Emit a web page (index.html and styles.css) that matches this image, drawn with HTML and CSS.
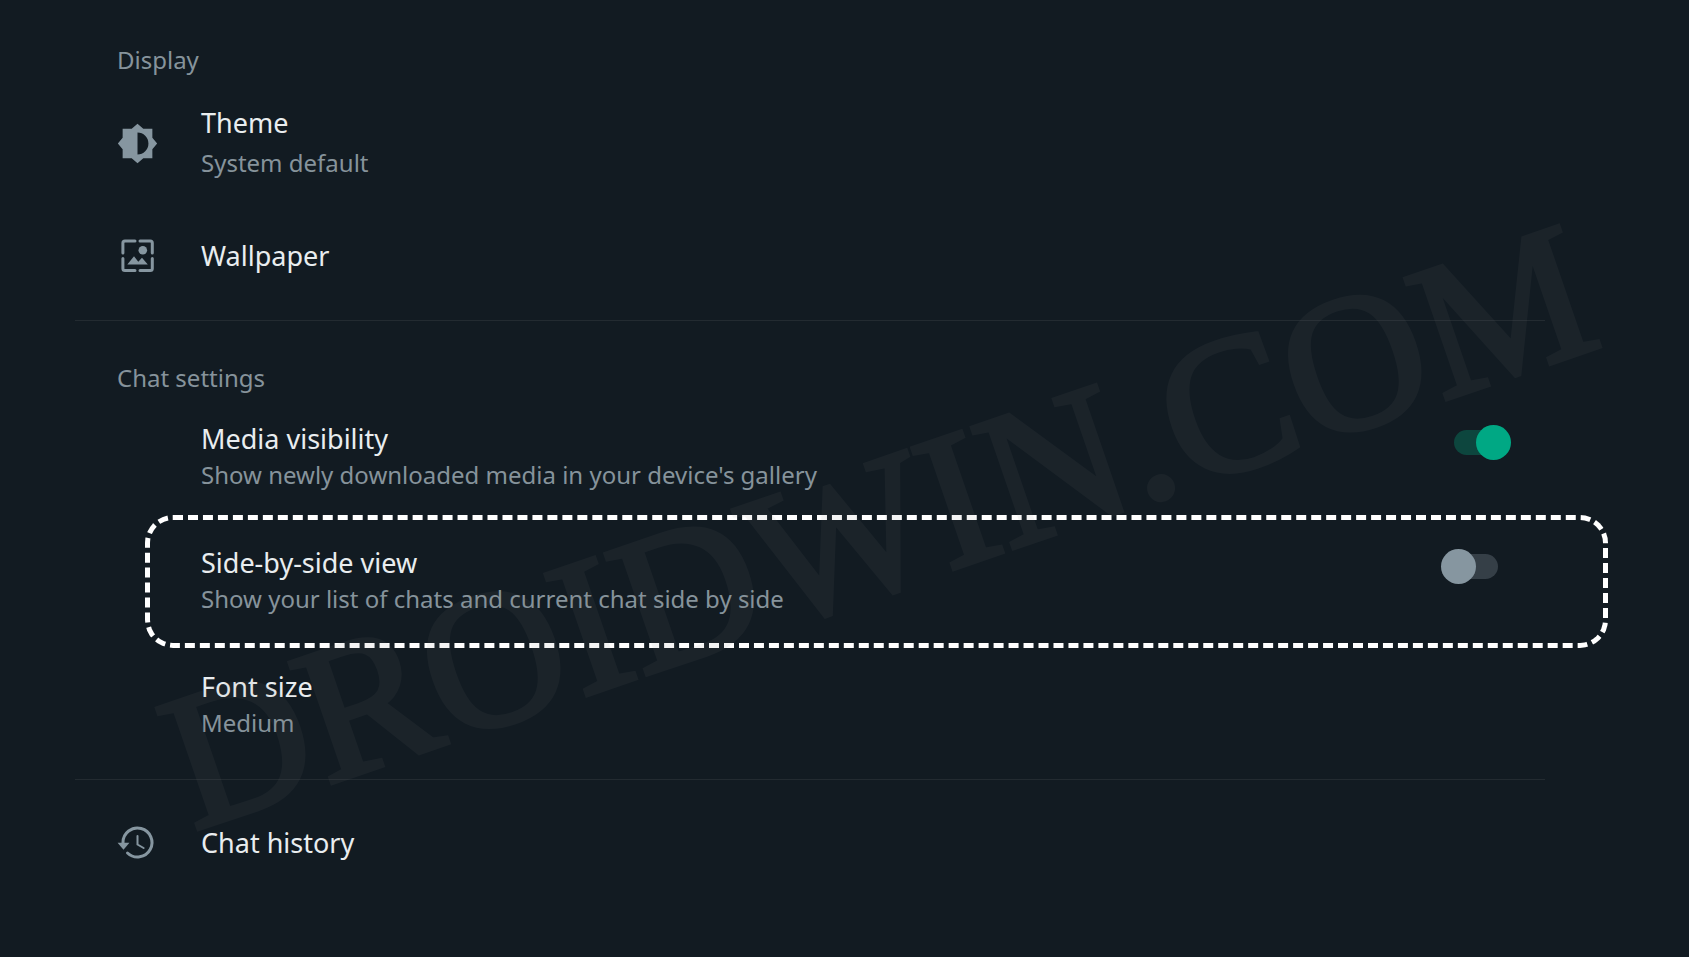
FILE: index.html
```html
<!DOCTYPE html>
<html lang="en">
<head>
    <meta charset="UTF-8">
    <meta name="viewport" content="width=device-width, initial-scale=1.0">
    <title>Chats</title>
    <link rel="stylesheet" href="styles.css">
</head>
<body>

    <main class="settings">
        <section class="group">
            <h2>Display</h2>

            <button class="row theme-row" type="button">
                <svg class="icon" viewBox="0 0 24 24" aria-hidden="true">
                    <path d="M20.700 15.400 23.500 12 20.700 8.600V3.300h-5.300L12 .5 8.600 3.300H3.300v5.300L.5 12 3.300 15.400V20.700h5.300L12 23.500 15.400 20.700h5.300zM12 18.400V5.600a6.400 6.400 0 0 1 0 12.800z"/>
                </svg>
                <span class="text">
                    <span class="title">Theme</span>
                    <span class="detail">System default</span>
                </span>
            </button>

            <button class="row wallpaper-row" type="button">
                <svg class="icon" viewBox="0 0 41 41" aria-hidden="true">
                    <path class="line" d="M5.900 18V8q0-2 2-2H18M23 6H33.300q2 0 2 2V18M35.300 23.500V33.500q0 2-2 2H23M18 35.500H7.900q-2 0-2-2V23.500"/>
                    <circle cx="25.800" cy="15.300" r="4.300"/>
                    <path d="M10.300 29.500 17 21.300l4.300 5.400 3.700-4 5.800 6.800z"/>
                </svg>
                <span class="text">
                    <span class="title">Wallpaper</span>
                </span>
            </button>
        </section>

        <section class="group">
            <h2>Chat settings</h2>

            <label class="row chat-row">
                <span class="text">
                    <span class="title">Media visibility</span>
                    <span class="detail">Show newly downloaded media in your device's gallery</span>
                </span>
                <input class="switch" type="checkbox" checked>
            </label>

            <label class="row chat-row highlight">
                <span class="text">
                    <span class="title">Side-by-side view</span>
                    <span class="detail">Show your list of chats and current chat side by side</span>
                </span>
                <input class="switch" type="checkbox">
            </label>

            <button class="row chat-row" type="button">
                <span class="text">
                    <span class="title">Font size</span>
                    <span class="detail">Medium</span>
                </span>
            </button>
        </section>

        <section class="group">
            <button class="row history-row" type="button">
                <svg class="icon" viewBox="0 0 41 41" aria-hidden="true">
                    <path class="line" d="M6 22V20.500A14.500 14.500 0 1 1 10.500 31"/>
                    <path d="M.6 20.800H12.400L6.500 27.700z"/>
                    <path class="line thin" d="M20.500 14V22.500L26.600 26"/>
                </svg>
                <span class="text">
                    <span class="title">Chat history</span>
                </span>
            </button>
        </section>
    </main>

    <div class="watermark">DROIDWIN.COM</div>

</body>
</html>
```
FILE: styles.css
```css
* {
    box-sizing: border-box;
    margin: 0;
    padding: 0;
}

body {
    position: relative;
    min-height: 100vh;
    overflow: hidden;
    background: #121b22;
    color: #e9edef;
    font-family: "Noto Sans", sans-serif;
}

.settings {
    padding: 3px 144px 0 75px;
}

/* Groups */
.group {
    padding: 38px 34px 12px 42px;
}

.group + .group {
    border-top: 1px solid #232b31;
}

h2 {
    color: #86939b;
    font-size: 24px;
    font-weight: 400;
    line-height: 38px;
}

/* Rows */
.row {
    display: flex;
    align-items: center;
    width: 100%;
    border: none;
    background: none;
    color: inherit;
    font: inherit;
    text-align: left;
    cursor: pointer;
}

.theme-row {
    padding: 26px 0 28px;
}

.wallpaper-row {
    padding: 26px 0 32px;
}

.chat-row {
    position: relative;
    padding: 26px 0 26px 84px;
}

h2 + .chat-row {
    padding-top: 24px;
}

.history-row {
    padding: 4px 0;
}

.text {
    display: flex;
    flex: 1;
    flex-direction: column;
}

.theme-row .text {
    gap: 4px;
}

.title {
    font-size: 27px;
    line-height: 36px;
}

.detail {
    color: #86939b;
    font-size: 24px;
    line-height: 36px;
}

/* Icons */
.icon {
    width: 41px;
    height: 41px;
    margin-right: 43px;
    fill: #8696a0;
}

.icon .line {
    fill: none;
    stroke: #8696a0;
    stroke-width: 3;
    stroke-linecap: round;
}

.icon .thin {
    stroke-width: 2;
}

/* Switch */
.switch {
    position: relative;
    align-self: flex-start;
    width: 70px;
    height: 35px;
    margin-top: 4px;
    appearance: none;
    cursor: pointer;
}

.switch::before {
    content: "";
    position: absolute;
    inset: 5px 13px;
    border-radius: 13px;
    background: #353f47;
}

.switch::after {
    content: "";
    position: absolute;
    top: 0;
    left: 0;
    width: 35px;
    height: 35px;
    border-radius: 50%;
    background: #8696a0;
}

.switch:checked::before {
    background: #0d463e;
}

.switch:checked::after {
    left: 35px;
    background: #00a884;
}

/* Dashed frame round the row */
.highlight::after {
    content: "";
    position: absolute;
    inset: -4px -97px -5px 28px;
    border: 5px dashed #fff;
    border-radius: 28px;
}

.watermark {
    position: absolute;
    top: 55%;
    left: 52%;
    transform: translate(-50%, -50%) rotate(-19deg);
    color: #808080;
    font-family: "Liberation Serif", serif;
    font-size: 194px;
    line-height: 1;
    white-space: nowrap;
    opacity: 0.08;
    -webkit-text-stroke: 5px #808080;
    pointer-events: none;
}
```
